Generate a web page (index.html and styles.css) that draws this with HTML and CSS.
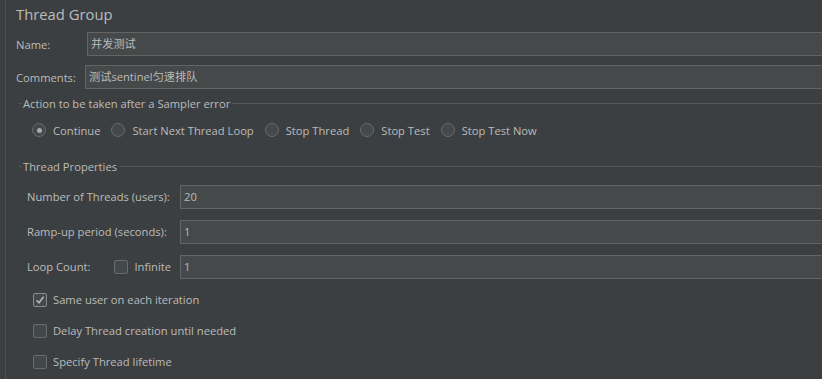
FILE: index.html
```html
<!DOCTYPE html>
<html lang="en">
<head>
  <meta charset="UTF-8" />
  <title>Thread Group</title>
  <link rel="stylesheet" href="styles.css">
</head>
<body>
  <div class="panel">
    <h1 class="title">Thread Group</h1>

    <div class="row row-name">
      <label class="lbl lbl-name">Name:</label>
      <div class="field">并发测试</div>
    </div>
    <div class="row row-comments">
      <label class="lbl lbl-comments">Comments:</label>
      <div class="field">测试sentinel匀速排队</div>
    </div>

    <div class="legend">Action to be taken after a Sampler error</div>
    <div class="radios">
      <span class="opt"><span class="radio on"></span>Continue</span>
      <span class="opt"><span class="radio"></span>Start Next Thread Loop</span>
      <span class="opt"><span class="radio"></span>Stop Thread</span>
      <span class="opt"><span class="radio"></span>Stop Test</span>
      <span class="opt"><span class="radio"></span>Stop Test Now</span>
    </div>

    <div class="legend legend-props">Thread Properties</div>
    <div class="props">
      <div class="prop">
        <span class="plabel">Number of Threads (users):</span>
        <div class="field">20</div>
      </div>
      <div class="prop">
        <span class="plabel">Ramp-up period (seconds):</span>
        <div class="field">1</div>
      </div>
      <div class="prop">
        <span class="plabel plabel-loop">Loop Count:<span class="box"></span>Infinite</span>
        <div class="field">1</div>
      </div>

      <div class="checks">
        <div class="check"><span class="box checked">
          <svg width="10" height="10" viewBox="0 0 10 10"><path d="M1.5 5.2 L4 7.8 L8.6 1.8" fill="none" stroke="#b4b4b4" stroke-width="1.6"/></svg>
        </span>Same user on each iteration</div>
        <div class="check"><span class="box"></span>Delay Thread creation until needed</div>
        <div class="check"><span class="box"></span>Specify Thread lifetime</div>
      </div>
    </div>
  </div>
</body>
</html>
```

FILE: styles.css
```css
* {
  box-sizing: border-box;
  margin: 0;
  padding: 0;
}

html, body {
  height: 100%;
  overflow: hidden;
}

body {
  background: #3c3f41;
  color: #bbbbbb;
  font-family: 'Open Sans', 'Noto Sans CJK SC', sans-serif;
  font-size: 11.2px;
  padding-left: 5px;
}

.panel {
  border-left: 1px solid #4b4e50;
  height: 100%;
  padding: 3px 0 0 10px;
  margin-right: -20px;
}

.title {
  font-size: 14.8px;
  font-weight: normal;
  line-height: 22px;
  margin-bottom: 7px;
}

.row {
  display: flex;
  align-items: center;
  height: 24px;
}

.row-comments {
  margin-top: 9px;
}

.lbl-name {
  width: 71px;
}

.lbl-comments {
  width: 69px;
}

.field {
  flex: 1;
  height: 24px;
  background: #45494a;
  border: 1px solid #646464;
  padding: 0 4px 0 3px;
  line-height: 22px;
  color: #bbbbbb;
}

.legend {
  display: flex;
  align-items: center;
  margin: 6px 0 0 3px;
  height: 16px;
}

.legend::before {
  content: '';
  width: 3px;
  height: 1px;
  background: #555859;
  margin-right: 1px;
}

.legend::after {
  content: '';
  flex: 1;
  height: 1px;
  background: #555859;
  margin-left: 2px;
}

.radios {
  display: flex;
  align-items: center;
  gap: 11px;
  padding-left: 16px;
  height: 24px;
  margin-top: 7px;
}

.opt {
  display: flex;
  align-items: center;
  gap: 7px;
}

.radio {
  width: 14px;
  height: 14px;
  border-radius: 50%;
  border: 1px solid #6b6b6b;
  background: #43494a;
  display: flex;
  align-items: center;
  justify-content: center;
}

.radio.on::after {
  content: '';
  width: 5px;
  height: 5px;
  border-radius: 50%;
  background: #a9a9a9;
}

.legend-props {
  margin-top: 16px;
}

.props {
  padding-left: 11px;
}

.prop {
  display: flex;
  align-items: center;
  height: 25px;
  margin-top: 10px;
}

.plabel {
  width: 153px;
  flex-shrink: 0;
  display: flex;
  align-items: center;
  white-space: nowrap;
}

.plabel-loop .box {
  margin: 0 6px 0 24px;
}

.box {
  width: 14px;
  height: 14px;
  border: 1px solid #6b6b6b;
  background: #43494a;
  border-radius: 2px;
  display: inline-flex;
  align-items: center;
  justify-content: center;
}

.box.checked {
  border-color: #8a8a8a;
}

.checks {
  padding-left: 6px;
  margin-top: 5px;
}

.check {
  display: flex;
  align-items: center;
  gap: 6px;
  height: 31px;
}
```
